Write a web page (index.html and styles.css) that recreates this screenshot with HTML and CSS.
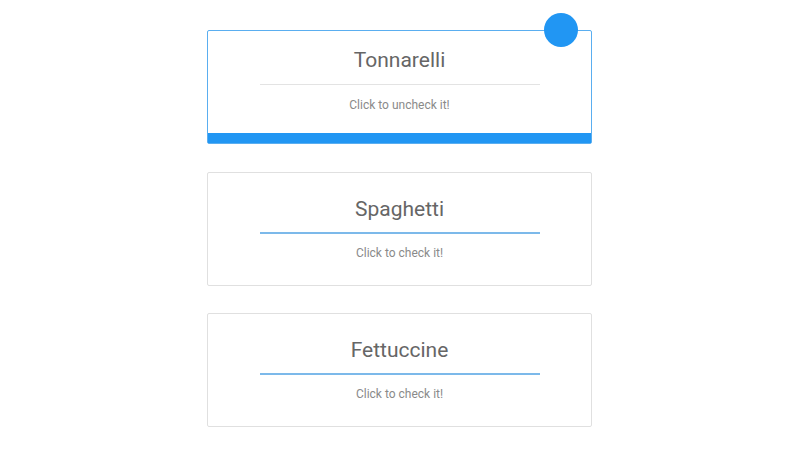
FILE: index.html
```html
<!DOCTYPE html>
<html>
<head>
<meta charset="utf-8">
<link rel="stylesheet" href="styles.css">
</head>
<body>
<div class="list">
  <div class="card checked">
    <span class="dot"></span>
    <div class="title">Tonnarelli</div>
    <div class="rule"></div>
    <div class="hint">Click to uncheck it!</div>
    <div class="bar"></div>
  </div>
  <div class="card">
    <div class="title">Spaghetti</div>
    <div class="rule"></div>
    <div class="hint">Click to check it!</div>
  </div>
  <div class="card">
    <div class="title">Fettuccine</div>
    <div class="rule"></div>
    <div class="hint">Click to check it!</div>
  </div>
</div>
</body>
</html>
```
FILE: styles.css
```css
html, body {
  margin: 0;
  padding: 0;
  background: #fff;
  font-family: Roboto, "Liberation Sans", sans-serif;
}
.list {
  display: flex;
  flex-direction: column;
  align-items: center;
  gap: 27.5px;
  padding-top: 30px;
  padding-right: 1px;
}
.card {
  position: relative;
  box-sizing: border-box;
  width: 385px;
  height: 114px;
  border: 1px solid #e0e0e0;
  border-radius: 2px;
  display: flex;
  flex-direction: column;
  align-items: center;
  padding-top: 24px;
  background: #fff;
}
.title {
  font-size: 21px;
  line-height: 24px;
  color: #666;
}
.rule {
  width: 280px;
  height: 2px;
  margin-top: 11px;
  background: #7cb9ea;
}
.hint {
  margin-top: 11px;
  font-size: 12px;
  line-height: 16px;
  color: #8a8a8a;
}
.card.checked {
  border-color: #5aaef0;
  padding-top: 17px;
}
.card.checked .rule {
  height: 1px;
  margin-top: 12px;
  background: #e3e3e3;
}
.card.checked .hint {
  margin-top: 12px;
}
.bar {
  margin-top: auto;
  align-self: stretch;
  height: 10px;
  background: #2196f3;
}
.dot {
  position: absolute;
  top: -18px;
  right: 13px;
  width: 34px;
  height: 34px;
  border-radius: 50%;
  background: #2196f3;
}
```
